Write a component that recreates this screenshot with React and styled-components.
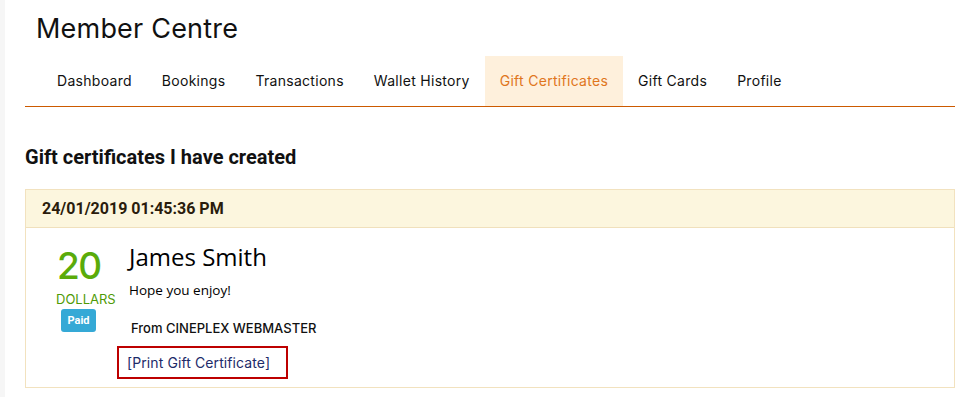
import React from 'react'
import styled, { createGlobalStyle } from 'styled-components'

const GlobalStyle = createGlobalStyle`
  body {
    margin: 0;
    background: #ffffff;
    font-family: Inter, "Open Sans", sans-serif;
  }
`;

const Page = styled.div`
  border-left: 5px solid #f6f6f6;
  padding: 0 8px 9px 20px;
  min-height: 397px;
  box-sizing: border-box;
`;

const Title = styled.h1`
  margin: 0;
  padding: 13px 0 0 11px;
  font-family: Inter, sans-serif;
  font-weight: 400;
  font-size: 27px;
  line-height: 32px;
  color: #111;
  letter-spacing: 0.2px;
`;

const Nav = styled.ul`
  list-style: none;
  display: flex;
  margin: 11px 0 0;
  padding: 0 0 0 17px;
  border-bottom: 1.5px solid #cc5a00;
`;

const Tab = styled.li`
  display: flex;
  align-items: center;
  height: 50px;
  padding: 0 15px 2px;
  box-sizing: border-box;
  font-size: 14px;
  letter-spacing: 0.29px;
  color: ${p => (p.active ? '#e0761c' : '#111')};
  background: ${p => (p.active ? '#fef0dc' : 'transparent')};
`;

const Heading = styled.h2`
  margin: 39px 0 0;
  font-family: Roboto, "Liberation Sans", sans-serif;
  font-size: 20px;
  font-weight: 700;
  line-height: 22px;
  color: #111;
`;

const Card = styled.div`
  margin-top: 21px;
  border: 1px solid #f2e2bf;
`;

const CardHeader = styled.div`
  height: 37px;
  display: flex;
  align-items: center;
  padding: 0 16px;
  background: #fcf6de;
  border-bottom: 1px solid #f0e0bc;
  font-family: Roboto, "Liberation Sans", sans-serif;
  font-weight: 700;
  font-size: 16px;
  color: #2a1c0c;
`;

const CardBody = styled.div`
  display: flex;
  padding: 16px 0 8px 30px;
`;

const AmountCol = styled.div`
  width: 73px;
  display: flex;
  flex-direction: column;
  align-items: flex-start;
`;

const Amount = styled.div`
  font-family: Inter, sans-serif;
  font-size: 37px;
  font-weight: 500;
  line-height: 44px;
  color: #5aab0a;
  letter-spacing: -1.5px;
  margin-left: 1px;
`;

const Unit = styled.div`
  margin-top: 3px;
  font-size: 13px;
  line-height: 16px;
  color: #4f9a06;
`;

const Badge = styled.span`
  margin: 2px 0 0 5px;
  width: 35px;
  height: 23px;
  display: flex;
  align-items: center;
  justify-content: center;
  border-radius: 3px;
  background: #35a9d6;
  color: #fff;
  font-family: Roboto, "Liberation Sans", sans-serif;
  font-size: 11px;
  font-weight: 700;
`;

const Details = styled.div`
  display: flex;
  flex-direction: column;
  align-items: flex-start;
`;

const Name = styled.div`
  font-family: "Open Sans", sans-serif;
  font-size: 24px;
  line-height: 30px;
  color: #000;
  margin-top: -2px;
`;

const Message = styled.div`
  font-family: "Open Sans", sans-serif;
  font-size: 13.5px;
  line-height: 18px;
  color: #000;
  margin-top: 9px;
`;

const From = styled.div`
  margin: 21px 0 0 2px;
  font-size: 13px;
  font-weight: 500;
  line-height: 16px;
  color: #111;
`;

const PrintBox = styled.div`
  margin: 10px 0 0 -12px;
  border: 2px solid #bd0000;
  padding: 4px 16px 4px 8px;
`;

const PrintLink = styled.a`
  font-size: 14px;
  line-height: 20px;
  color: #1d2b6a;
  text-decoration: none;
  letter-spacing: 0.1px;
`;

const tabs = ['Dashboard', 'Bookings', 'Transactions', 'Wallet History', 'Gift Certificates', 'Gift Cards', 'Profile'];

const App = () => {
    return (
        <>
            <GlobalStyle />
            <Page>
                <Title>Member Centre</Title>
                <Nav>
                    {tabs.map(t => (
                        <Tab key={t} active={t === 'Gift Certificates'}>{t}</Tab>
                    ))}
                </Nav>
                <Heading>Gift certificates I have created</Heading>
                <Card>
                    <CardHeader>24/01/2019 01:45:36 PM</CardHeader>
                    <CardBody>
                        <AmountCol>
                            <Amount>20</Amount>
                            <Unit>DOLLARS</Unit>
                            <Badge>Paid</Badge>
                        </AmountCol>
                        <Details>
                            <Name>James Smith</Name>
                            <Message>Hope you enjoy!</Message>
                            <From>From CINEPLEX WEBMASTER</From>
                            <PrintBox>
                                <PrintLink href="#">[Print Gift Certificate]</PrintLink>
                            </PrintBox>
                        </Details>
                    </CardBody>
                </Card>
            </Page>
        </>
    )
}

export default App
